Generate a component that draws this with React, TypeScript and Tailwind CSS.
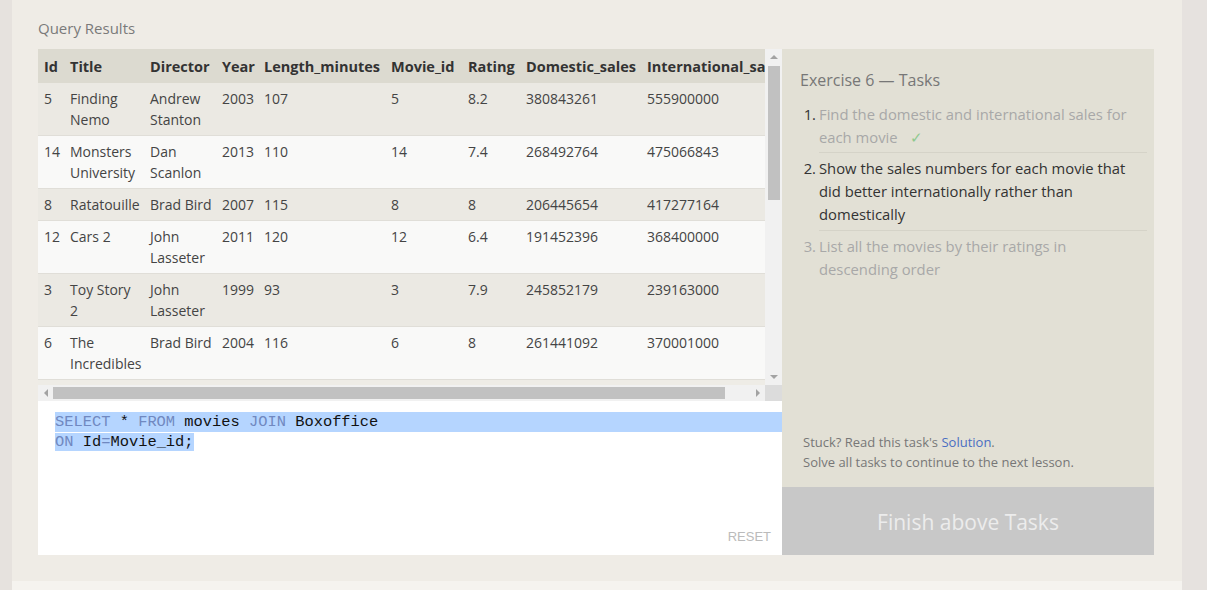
import React from "react";

const cols = [
  { key: "Id", w: 26 },
  { key: "Title", w: 80 },
  { key: "Director", w: 72 },
  { key: "Year", w: 42 },
  { key: "Length_minutes", w: 127 },
  { key: "Movie_id", w: 77 },
  { key: "Rating", w: 58 },
  { key: "Domestic_sales", w: 121 },
  { key: "International_sales", w: 150 },
];

const rows: string[][] = [
  ["5", "Finding Nemo", "Andrew Stanton", "2003", "107", "5", "8.2", "380843261", "555900000"],
  ["14", "Monsters University", "Dan Scanlon", "2013", "110", "14", "7.4", "268492764", "475066843"],
  ["8", "Ratatouille", "Brad Bird", "2007", "115", "8", "8", "206445654", "417277164"],
  ["12", "Cars 2", "John Lasseter", "2011", "120", "12", "6.4", "191452396", "368400000"],
  ["3", "Toy Story 2", "John Lasseter", "1999", "93", "3", "7.9", "245852179", "239163000"],
  ["6", "The Incredibles", "Brad Bird", "2004", "116", "6", "8", "261441092", "370001000"],
];

const sans = "font-['Open_Sans','Noto_Sans',sans-serif]";

function Tri({ dir }: { dir: "up" | "down" | "left" | "right" }) {
  const pts =
    dir === "up"
      ? "0,4 4,0 8,4"
      : dir === "down"
      ? "0,0 8,0 4,4"
      : dir === "left"
      ? "4,0 4,8 0,4"
      : "0,0 0,8 4,4";
  const w = dir === "up" || dir === "down" ? 8 : 4;
  const h = dir === "up" || dir === "down" ? 4 : 8;
  return (
    <svg width={w} height={h} viewBox={`0 0 ${w} ${h}`}>
      <polygon points={pts} fill="#a3a3a3" />
    </svg>
  );
}

export default function App() {
  return (
    <div className={`w-[1207px] h-[590px] flex bg-[#e6e2de] overflow-hidden ${sans}`}>
      <div className="w-[12px] shrink-0" />
      <div className="w-[1170px] shrink-0 flex flex-col">
        <div className="bg-[#efece6] pl-[26px] pr-[28px] pt-[18px] pb-[26px]">
          <div className="text-[15px] leading-[20px] text-[#7a7a7a] mb-[11px]">Query Results</div>
          <div className="flex h-[506px]">
            {/* left column */}
            <div className="w-[744px] flex flex-col">
              <div className="h-[352px] flex flex-col bg-[#f1f1f1]">
                <div className="flex h-[336px]">
                  <div className="w-[727px] overflow-hidden bg-[#eeece6]">
                    <table className="table-fixed border-collapse text-[14px] leading-[21px] text-[#444]" style={{ width: 753 }}>
                      <colgroup>
                        {cols.map((c) => (
                          <col key={c.key} style={{ width: c.w }} />
                        ))}
                      </colgroup>
                      <thead>
                        <tr className="bg-[#dcdad0] h-[34px]">
                          {cols.map((c) => (
                            <th key={c.key} className="text-left font-bold text-[14.5px] text-[#333] pl-[6px] pr-0 whitespace-nowrap align-middle">
                              {c.key}
                            </th>
                          ))}
                        </tr>
                      </thead>
                      <tbody>
                        {rows.map((r, i) => (
                          <tr
                            key={i}
                            className={`${i % 2 === 0 ? "bg-[#ebe9e3]" : "bg-[#f9f9f8]"} border-b border-[#e0ded8]`}
                          >
                            {r.map((v, j) => (
                              <td key={j} className="align-top pl-[6px] pr-[4px] pt-[5px] pb-[5px]">
                                {v}
                              </td>
                            ))}
                          </tr>
                        ))}
                      </tbody>
                    </table>
                  </div>
                  {/* vertical scrollbar */}
                  <div className="w-[17px] h-[336px] bg-[#f1f1f1] flex flex-col items-center">
                    <div className="h-[16px] flex items-center justify-center">
                      <Tri dir="up" />
                    </div>
                    <div className="w-[12px] h-[134px] mt-[1px] bg-[#c1c1c1]" />
                    <div className="flex-1" />
                    <div className="h-[16px] flex items-center justify-center">
                      <Tri dir="down" />
                    </div>
                  </div>
                </div>
                {/* horizontal scrollbar */}
                <div className="flex h-[16px]">
                  <div className="w-[727px] bg-[#f1f1f1] flex items-center">
                    <div className="w-[15px] flex items-center justify-center">
                      <Tri dir="left" />
                    </div>
                    <div className="w-[672px] h-[12px] bg-[#c1c1c1]" />
                    <div className="flex-1 flex items-center justify-end pr-[5px]">
                      <Tri dir="right" />
                    </div>
                  </div>
                  <div className="w-[17px] bg-[#dcdcdc]" />
                </div>
              </div>
              {/* editor */}
              <div className="flex-1 bg-white flex flex-col pt-[11px] font-['Liberation_Mono',monospace] text-[15.4px] leading-[20px] text-[#111]">
                <div className="ml-[17px] bg-[#b5d5ff] whitespace-pre">
                  <span className="text-[#7088c0]">SELECT</span> * <span className="text-[#7088c0]">FROM</span> movies{" "}
                  <span className="text-[#7088c0]">JOIN</span> Boxoffice
                </div>
                <div className="ml-[17px] whitespace-pre">
                  <span className="bg-[#b5d5ff]">
                    <span className="text-[#7088c0]">ON</span> Id<span className="text-[#7088c0]">=</span>Movie_id;
                  </span>
                </div>
                <div className="flex-1" />
                <div className="text-right pr-[11px] pb-[9px] text-[13px] leading-[18px] text-[#bbb] font-['Liberation_Sans',sans-serif]">
                  RESET
                </div>
              </div>
            </div>
            {/* right column */}
            <div className="w-[372px] flex flex-col bg-[#e2e0d5]">
              <div className="pl-[18px] pr-[7px] pt-[19px]">
                <div className="text-[16px] leading-[24px] text-[#777]">Exercise 6 — Tasks</div>
                <div className="mt-[7px] text-[14.8px] leading-[23px]">
                  <div className="flex">
                    <div className="w-[19px] text-right pr-[3px] pt-[4px] text-[#333] shrink-0">1.</div>
                    <div className="flex-1 pt-[4px] pb-[3px] pr-[11px] border-b border-[#d5d3c8] text-[#a8a8a8]">
                      Find the domestic and international sales for each movie
                      <span className="text-[#8fc98f] ml-[12px]">✓</span>
                    </div>
                  </div>
                  <div className="flex">
                    <div className="w-[19px] text-right pr-[3px] text-[#333] shrink-0 pt-[4px]">2.</div>
                    <div className="flex-1 pt-[4px] pb-[4px] pr-[11px] border-b border-[#d5d3c8] text-[#333]">
                      Show the sales numbers for each movie that did better internationally rather than domestically
                    </div>
                  </div>
                  <div className="flex">
                    <div className="w-[19px] text-right pr-[3px] text-[#a8a8a8] shrink-0 pt-[4px]">3.</div>
                    <div className="flex-1 pt-[4px] pb-[4px] pr-[11px] text-[#a8a8a8]">
                      List all the movies by their ratings in descending order
                    </div>
                  </div>
                </div>
              </div>
              <div className="flex-1" />
              <div className="pl-[21px] pb-[15px] text-[13px] leading-[20px] text-[#777]">
                <div>
                  Stuck? Read this task's <span className="text-[#4a6ec2]">Solution</span>.
                </div>
                <div>Solve all tasks to continue to the next lesson.</div>
              </div>
              <div className="h-[68px] bg-[#c8c8c8] flex items-center justify-center pt-[3px] text-[21px] text-[#ececec]">
                Finish above Tasks
              </div>
            </div>
          </div>
        </div>
        <div className="flex-1 bg-[#f5f3ef]" />
      </div>
      <div className="flex-1 bg-[#e6e2df]" />
    </div>
  );
}
